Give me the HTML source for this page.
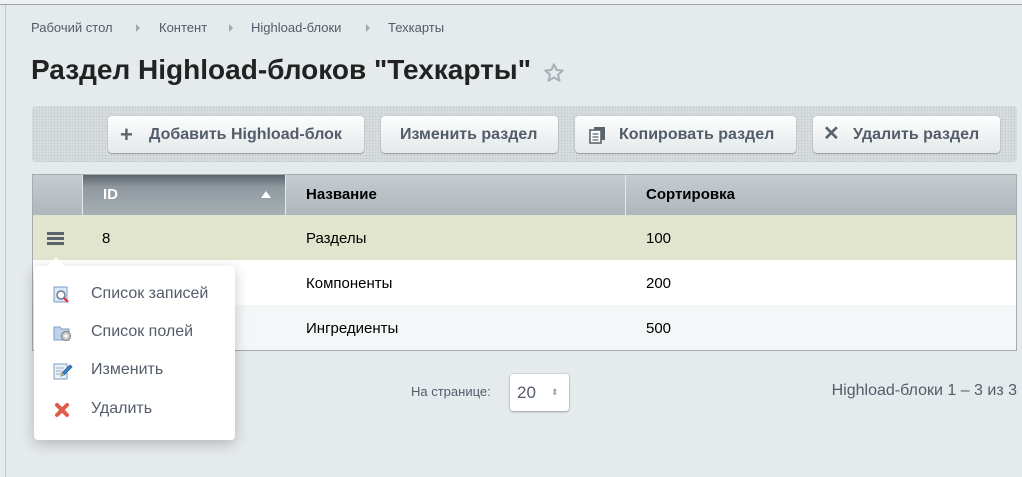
<!DOCTYPE html>
<html><head><meta charset="utf-8"><style>
*{margin:0;padding:0;box-sizing:border-box}
body{width:1022px;height:477px;overflow:hidden;background:#e5eaec;font-family:"Liberation Sans",Arial,sans-serif;position:relative}
.abs{position:absolute}
.topline{left:0;top:0;width:1022px;height:5px;background:#eef2f3;border-bottom:1px solid #9da5a9}
.leftline{left:5px;top:5px;width:1px;height:472px;background:#c3cacd}
.bc{top:20px;font-size:13px;color:#535c69;white-space:nowrap}
.bc span{position:absolute}
.tri{width:0;height:0;border-left:4px solid #a2a9ae;border-top:4px solid transparent;border-bottom:4px solid transparent;top:4px}
h1{position:absolute;left:31px;top:54px;font-size:28px;font-weight:bold;color:#222;white-space:nowrap}
.toolbar{left:32px;top:106px;width:985px;height:56px;border-radius:4px;background:#d8dde0;background-image:radial-gradient(#c8cdd0 1px,transparent 1px);background-size:3px 3px}
.btn{top:116px;height:37px;border-radius:4px;background:linear-gradient(#fdfefe,#e4e8ea);box-shadow:0 1px 1px rgba(0,0,0,.25),0 0 0 1px rgba(0,0,0,.05);font-size:16px;font-weight:bold;color:#535c69;line-height:37px;white-space:nowrap}
.btn span{position:absolute;top:0}
.tbl{left:32px;top:174px;width:985px;height:177px;border:1px solid #a4acb0;background:#fff}
.th{top:0;height:40px;background:linear-gradient(#c5ccd0,#aeb7bc);border-right:1px solid #e4e8ea;font-size:15px;font-weight:bold;color:#000;line-height:40px}
.row{left:0;width:983px;height:45px;font-size:15px;color:#000;line-height:47px}
.row span{position:absolute}
.popup{left:34px;top:266px;width:201px;height:174px;background:#fff;border-radius:4px;box-shadow:0 4px 14px rgba(0,0,0,.22)}
.mi{position:absolute;left:57px;font-size:16px;color:#535c69}
</style></head><body>
<div class="abs topline"></div>
<div class="abs leftline"></div>
<div class="abs bc" style="left:0;width:600px">
<span style="left:31px">Рабочий стол</span><span class="tri" style="left:136px"></span>
<span style="left:159px">Контент</span><span class="tri" style="left:229px"></span>
<span style="left:251px">Highload-блоки</span><span class="tri" style="left:366px"></span>
<span style="left:388px">Техкарты</span></div>
<h1>Раздел Highload-блоков "Техкарты"</h1>
<svg class="abs" style="left:543px;top:62px" width="22" height="22" viewBox="0 0 24 24"><path d="M12 2.5l2.8 6.2 6.7.6-5.1 4.5 1.6 6.6L12 16.9l-6 3.5 1.6-6.6-5.1-4.5 6.7-.6z" fill="none" stroke="#a9b1b7" stroke-width="2.2" stroke-linejoin="round"/></svg>
<div class="abs toolbar"></div>
<div class="abs btn" style="left:108px;width:256px"><span style="left:12px;font-size:22px;color:#5c646c">+</span><span style="left:41px">Добавить Highload-блок</span></div>
<div class="abs btn" style="left:381px;width:177px"><span style="left:19px">Изменить раздел</span></div>
<div class="abs btn" style="left:575px;width:221px"><svg class="abs" style="left:14px;top:10px" width="17" height="18" viewBox="0 0 17 18"><rect x="5" y="1" width="11" height="13" fill="#5c646c"/><rect x="1" y="4" width="11" height="13" fill="#fff" stroke="#5c646c" stroke-width="1.6"/><path d="M3.5 8h6M3.5 11h6M3.5 14h6" stroke="#5c646c" stroke-width="1.3"/></svg><span style="left:44px">Копировать раздел</span></div>
<div class="abs btn" style="left:813px;width:187px"><span style="left:10px;font-size:20px;color:#5c646c">✕</span><span style="left:40px">Удалить раздел</span></div>
<div class="abs tbl">
<div class="abs th" style="left:0;width:50px"></div>
<div class="abs th" style="left:50px;width:203px;background:linear-gradient(#5b646b,#8f999f 30%,#a6afb4);color:#fff;padding-left:20px">ID<span style="position:absolute;right:14px;top:16px;width:0;height:0;border-left:5px solid transparent;border-right:5px solid transparent;border-bottom:7px solid #fff"></span></div>
<div class="abs th" style="left:253px;width:340px;padding-left:20px">Название</div>
<div class="abs th" style="left:593px;width:390px;padding-left:20px;border-right:none">Сортировка</div>
<div class="abs row" style="top:40px;background:#e2e5cd"><span style="left:14px;top:17px;width:17px;height:3px;background:#5c646c;box-shadow:0 5px 0 #5c646c,0 10px 0 #5c646c"></span><span style="left:69px">8</span><span style="left:273px">Разделы</span><span style="left:613px">100</span></div>
<div class="abs row" style="top:85px;background:#fff"><span style="left:273px">Компоненты</span><span style="left:613px">200</span></div>
<div class="abs row" style="top:130px;background:#f4f7f8;height:45px"><span style="left:273px">Ингредиенты</span><span style="left:613px">500</span></div>
</div>
<div class="abs popup">
<div class="abs" style="left:16px;top:-6px;width:12px;height:12px;background:#fff;transform:rotate(45deg)"></div>
<svg class="abs" style="left:19px;top:20px" width="18" height="18" viewBox="0 0 18 18"><rect x="1" y="1" width="13" height="15" fill="#dce8f5" stroke="#7d9cc4"/><circle cx="8" cy="9" r="4" fill="#fff" stroke="#6b7f95" stroke-width="1.5"/><path d="M11 12l4 4" stroke="#d33" stroke-width="2.2"/></svg>
<div class="mi" style="top:19px">Список записей</div>
<svg class="abs" style="left:19px;top:58px" width="20" height="18" viewBox="0 0 20 18"><path d="M1 3h6l1.5 2H16v11H1z" fill="#bcd3ea" stroke="#7d9cc4"/><circle cx="13" cy="12" r="4.5" fill="#ccc" stroke="#777"/><circle cx="13" cy="12" r="1.6" fill="#fff"/></svg>
<div class="mi" style="top:57px">Список полей</div>
<svg class="abs" style="left:19px;top:96px" width="20" height="18" viewBox="0 0 20 18"><rect x="1" y="2" width="13" height="15" fill="#eaf1f9" stroke="#7d9cc4"/><path d="M3 6h8M3 9h6M3 12h5" stroke="#9ab" stroke-width="1"/><path d="M8 14l1-3 8-8 2 2-8 8z" fill="#3b82c4" stroke="#2a5f90" stroke-width=".8"/><path d="M8 14l1-3 2 2z" fill="#f2c36b"/></svg>
<div class="mi" style="top:95px">Изменить</div>
<svg class="abs" style="left:20px;top:136px" width="16" height="16" viewBox="0 0 16 16"><path d="M3 3l10 10M13 3L3 13" stroke="#e05a4a" stroke-width="4" stroke-linecap="round"/></svg>
<div class="mi" style="top:134px">Удалить</div>
</div>
<div class="abs" style="left:411px;top:384px;font-size:13px;color:#535c69">На странице:</div>
<div class="abs" style="left:510px;top:374px;width:59px;height:37px;border-radius:3px;background:#fff;box-shadow:0 1px 2px rgba(0,0,0,.25),0 0 0 1px rgba(0,0,0,.07);font-size:17px;color:#535c69;line-height:37px;padding-left:7px">20<span style="position:absolute;left:41px;top:0;font-size:9px;color:#9aa">⬍</span></div>
<div class="abs" style="right:5px;top:382px;font-size:16px;color:#535c69">Highload-блоки 1 – 3 из 3</div>
</body></html>
